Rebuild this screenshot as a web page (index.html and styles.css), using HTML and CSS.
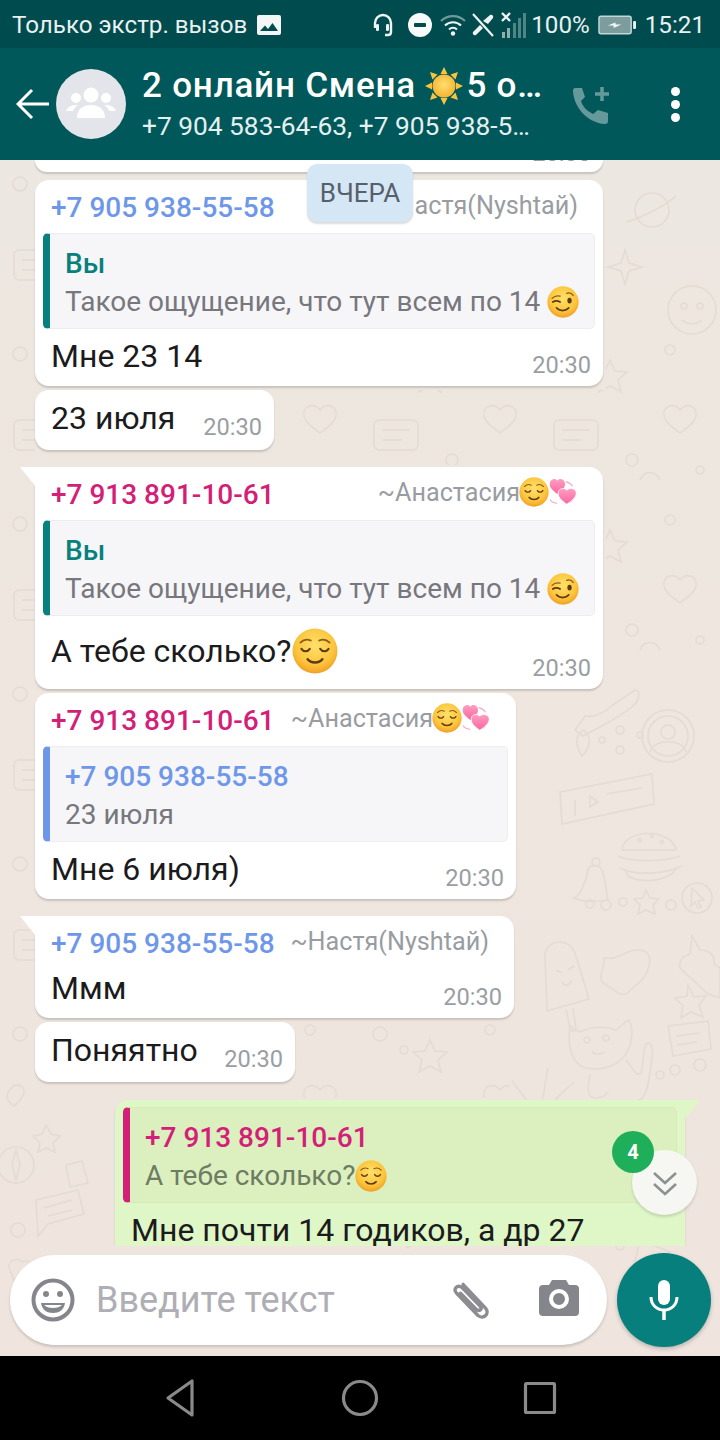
FILE: index.html
```html
<!DOCTYPE html>
<html lang="ru">
<head>
    <meta charset="UTF-8">
    <meta name="viewport" content="width=device-width, initial-scale=1.0">
    <title>2 онлайн Смена</title>
    <link rel="stylesheet" href="styles.css">
</head>
<body>
    <!-- shared emoji drawings -->
    <svg class="defs" aria-hidden="true">
        <defs>
            <radialGradient id="faceFill" cx="50%" cy="38%" r="65%">
                <stop offset="0" stop-color="#ffe06a"/>
                <stop offset="0.65" stop-color="#fcc53d"/>
                <stop offset="1" stop-color="#f09a22"/>
            </radialGradient>
            <radialGradient id="sunFill" cx="50%" cy="45%" r="55%">
                <stop offset="0" stop-color="#ffdf75"/>
                <stop offset="1" stop-color="#f8b32e"/>
            </radialGradient>
            <linearGradient id="heartFill" x1="0" y1="0" x2="0" y2="1">
                <stop offset="0" stop-color="#ff9cc0"/>
                <stop offset="1" stop-color="#f868a0"/>
            </linearGradient>
            <symbol id="relieved" viewBox="0 0 44 44">
                <circle cx="22" cy="22" r="21.5" fill="url(#faceFill)"/>
                <path d="M8 14c3-3 7-3.500 10-2M26 12c3-1.500 7-1 10 2" fill="none" stroke="#8a5a1c" stroke-width="1.600" stroke-linecap="round"/>
                <path d="M9 20c2 3 6 3 8 0M27 20c2 3 6 3 8 0" fill="none" stroke="#5e3a12" stroke-width="2" stroke-linecap="round"/>
                <path d="M15 30c3 4 11 4 14 0" fill="none" stroke="#5e3a12" stroke-width="2.400" stroke-linecap="round"/>
            </symbol>
            <symbol id="wink" viewBox="0 0 44 44">
                <circle cx="22" cy="22" r="21.500" fill="url(#faceFill)"/>
                <path d="M7 17c3-3 7-4 11-3M27 10c3-1 7 0 9 3" fill="none" stroke="#8a5a1c" stroke-width="1.800" stroke-linecap="round"/>
                <path d="M8 22c3-2 7-2 10 0" fill="none" stroke="#5e3a12" stroke-width="2.400" stroke-linecap="round"/>
                <ellipse cx="31" cy="20" rx="3" ry="4" fill="#5e3a12"/>
                <path d="M13 30c4 5 13 5 17 0" fill="none" stroke="#5e3a12" stroke-width="2.400" stroke-linecap="round"/>
            </symbol>
            <symbol id="hearts" viewBox="0 0 32 32">
                <path d="M19 5c3 1 6 2 7 5M2 24c2 3 5 4 8 4M22 27c2 0 3-1 4-2" fill="none" stroke="#f4a8c6" stroke-width="1.300"/>
                <path d="M10 18C5 14 1 11 2 6c1-4 6-5 8-2 2-3 7-2 8 2 1 5-3 8-8 12z" fill="url(#heartFill)"/>
                <path d="M20 29c-6-4-10-8-9-13 1-4 6-5 9-2 3-3 9-2 10 2 1 5-4 9-10 13z" fill="url(#heartFill)" stroke="#fff" stroke-width="0.800"/>
            </symbol>
            <symbol id="sun" viewBox="0 0 38 38">
                <path d="M19 0l3.500 7h-7zM19 38l-3.500-7h7zM0 19l7-3.500v7zM38 19l-7 3.500v-7zM5 5l7.500 2.500-5 5zM33 5l-2.500 7.500-5-5zM5 33l2.500-7.500 5 5zM33 33l-7.500-2.500 5-5z" fill="#f8c440"/>
                <circle cx="19" cy="19" r="11.500" fill="url(#sunFill)"/>
            </symbol>
        </defs>
    </svg>

    <div class="phone">
        <div class="status-bar">
            <span class="status-text">Только экстр. вызов</span>
            <svg class="st-gallery" viewBox="0 0 24 20"><path fill="#f2f6f6" fill-rule="evenodd" d="M2 0h20a2 2 0 0 1 2 2v16a2 2 0 0 1-2 2H2a2 2 0 0 1-2-2V2a2 2 0 0 1 2-2zm1 16h18l-5.500-8-4.500 6-3-3.500z"/></svg>
            <span class="spacer"></span>
            <svg class="st-headset" viewBox="0 0 20 24"><path d="M2 15v-5a8 8 0 0 1 16 0v9c0 2-1 3-3 3h-3" fill="none" stroke="#eef4f4" stroke-width="2.400"/><rect x="3" y="11" width="3" height="7" rx="1.200" fill="#eef4f4"/><rect x="13" y="11" width="3" height="7" rx="1.200" fill="#eef4f4"/></svg>
            <svg class="st-dnd" viewBox="0 0 24 24"><circle cx="12" cy="12" r="12" fill="#f6fafa"/><rect x="6" y="10" width="12" height="4" rx="1" fill="#004b4d"/></svg>
            <svg class="st-wifi" viewBox="0 0 26 22"><path d="M1 7a17 17 0 0 1 24 0" fill="none" stroke="#6f9a9a" stroke-width="2.200"/><path d="M5 11.500a11.500 11.500 0 0 1 16 0M9 15.500a6 6 0 0 1 8 0" fill="none" stroke="#eef4f4" stroke-width="2.200"/><circle cx="13" cy="19.500" r="2.200" fill="#eef4f4"/></svg>
            <svg class="st-call" viewBox="0 0 22 24"><path d="M1 1l20 22" stroke="#eef4f4" stroke-width="2.200"/><path d="M11 8l7-6c2-1 4 1 3 3l-5 6zM8 12l-7 7c-1 2 1 4 3 3l7-7z" fill="#eef4f4"/></svg>
            <svg class="st-signal" viewBox="0 0 25 26"><path d="M1 1l8 8M9 1L1 9" stroke="#eef4f4" stroke-width="2.400"/><path d="M1 20h3v6H1zM6 16h3v10H6z" fill="#8fb0b0"/><path d="M12 11h3v15h-3zM17 6h3v20h-3zM22 1h3v25h-3z" fill="#4f8587"/></svg>
            <span class="status-text st-pct">100%</span>
            <svg class="st-battery" viewBox="0 0 40 20"><rect x="1" y="1" width="33" height="18" rx="2" fill="#7c9c9e" stroke="#c4d6d6" stroke-width="1.500"/><rect x="36" y="6" width="3" height="8" rx="1" fill="#e8f0f0"/><path d="M10 10.500l8-3v2h6l-8 3.500v-2.500z" fill="#f4f8f8"/></svg>
            <span class="status-text st-clock">15:21</span>
        </div>

        <header class="chat-header">
            <svg class="back-icon" viewBox="0 0 34 32"><path d="M33 16H3M16 2L2 16l14 14" fill="none" stroke="#fff" stroke-width="3"/></svg>
            <div class="avatar">
                <svg viewBox="0 0 50 34"><circle cx="25" cy="8" r="7.500" fill="#fff"/><circle cx="10" cy="11" r="5" fill="#fff"/><circle cx="40" cy="11" r="5" fill="#fff"/><path d="M11 31c0-9 6-13 14-13s14 4 14 13z" fill="#fff"/><path d="M0 24c2-5 6-6 12-6-3 2-4 3-5 6zM50 24c-2-5-6-6-12-6 3 2 4 3 5 6z" fill="#fff"/></svg>
            </div>
            <div class="chat-title">
                <div class="group-name">2 онлайн Смена <svg class="emoji-sun"><use href="#sun"/></svg>5 о…</div>
                <div class="group-members">+7 904 583-64-63, +7 905 938-5…</div>
            </div>
            <svg class="add-call" viewBox="0 0 40 40"><path d="M3 2h7l3 9-4 4c2 6 6 10 12 13l5-4 10 3v8c0 2-1 3-3 3C15 37 1 20 1 4c0-1 1-2 2-2z" fill="#66999c"/><path d="M30 1v14M23 8h14" stroke="#66999c" stroke-width="3.500"/></svg>
            <div class="menu-dots"><i></i><i></i><i></i></div>
        </header>

        <main class="chat">
            <svg class="wallpaper" viewBox="0 0 720 1196" aria-hidden="true">
                <defs>
                    <pattern id="doodles" width="180" height="170" patternUnits="userSpaceOnUse">
                        <circle cx="20" cy="24" r="7"/><circle cx="44" cy="40" r="4"/><circle cx="130" cy="20" r="5"/><circle cx="92" cy="130" r="6"/><circle cx="160" cy="140" r="4"/>
                        <path d="M70 30l5 11 12 1-9 8 3 12-11-6-11 6 3-12-9-8 12-1z"/>
                        <path d="M140 80c-6-8-18-4-16 6 1 7 10 12 16 17 6-5 15-10 16-17 2-10-10-14-16-6z"/>
                        <rect x="14" y="90" width="44" height="30" rx="5"/><path d="M22 100h28M22 110h20"/>
                        <path d="M100 150c4-10 16-10 20 0"/>
                    </pattern>
                </defs>
                <rect class="doodle-fill" x="606" y="170" width="114" height="350"/>
                <rect class="doodle-fill" x="0" y="0" width="35" height="930"/>
                <rect class="doodle-fill" x="280" y="230" width="326" height="75"/>
                <rect class="doodle-fill" x="300" y="862" width="210" height="76"/>
                <g class="doodle">
                    <!-- planet and star, top right -->
                    <circle cx="652" cy="50" r="17"/><path d="M626 62c10-2 40-16 50-26"/>
                    <path d="M625 90l4 13 13 4-13 4-4 13-4-13-13-4 13-4z"/>
                    <circle cx="692" cy="150" r="24"/><circle cx="684" cy="146" r="3"/><circle cx="700" cy="146" r="3"/><path d="M682 160c6 5 14 5 20 0"/>
                    <!-- shoe -->
                    <path d="M575 570l10-14c12 2 20-4 26-10l24-16c6 0 4 10 0 14-12 12-34 22-52 32z"/>
                    <!-- profile circle -->
                    <circle cx="668" cy="576" r="26"/><circle cx="668" cy="572" r="7"/><path d="M650 592c3-14 33-14 36 0"/><circle cx="668" cy="576" r="20"/>
                    <!-- voice note -->
                    <path d="M560 632l92-18 2 30-92 20z"/><path d="M575 640v16M590 636l8 6-8 5zM606 634l36-6"/>
                    <!-- pin and dots -->
                    <path d="M584 570c-8 4-10 14-2 26 8-8 10-18 2-26z"/><circle cx="620" cy="570" r="4"/><circle cx="640" cy="575" r="3"/><circle cx="602" cy="580" r="3"/><circle cx="620" cy="590" r="4"/>
                    <!-- burger -->
                    <path d="M622 690c2-22 50-22 54 0z"/><path d="M618 696c12 6 46 6 62 0M620 708c14 8 46 6 62-2"/><path d="M626 712c2 12 44 12 50-4"/>
                    <circle cx="640" cy="680" r="1.500"/><circle cx="652" cy="676" r="1.500"/><circle cx="662" cy="682" r="1.500"/>
                    <!-- bell -->
                    <path d="M574 738c6-2 12-16 14-28 2-6 10-6 14 0 4 8 4 24 6 30-10 2-26 2-34-2z"/><circle cx="596" cy="702" r="4"/>
                    <!-- star row -->
                    <path d="M646 730l4 8 9 1-6 6 2 9-9-4-8 4 2-9-6-6 9-1z"/><circle cx="590" cy="744" r="4"/><circle cx="606" cy="745" r="5"/><circle cx="623" cy="742" r="4"/><circle cx="671" cy="745" r="5"/>
                    <circle cx="697" cy="738" r="15"/><path d="M692 728l12 12-6 1 3 6-3 1-3-6-4 4z"/>
                    <!-- popsicle -->
                    <path d="M545 795c2-16 24-18 30-2l14 46-42 12z"/><path d="M566 850l4 18c1 4 6 4 6 0l-3-20"/><path d="M556 810l6 3M574 806l-6 4M562 822c3 5 8 4 9-2"/>
                    <!-- splash -->
                    <path d="M604 798c16 2 20-8 34-8s14 12 8 24c-4 8-14 14-20 20-8 2-14-6-24-12-4-10 4-16 2-24z"/>
                    <!-- cupcake -->
                    <path d="M692 776l8 14c10 0 16 6 14 14l6 4v30l-12-4-28-26c-2-8 4-12 10-14z"/>
                    <path d="M660 840l6 12 12-1-7 9 4 12-12-5-10 6 2-12-8-8 12-2z" transform="translate(28 -15)"/>
                    <!-- cat -->
                    <path d="M570 866l10 6c12-6 26-6 36-2l12-10c6 4 4 24 0 30-6 14-24 22-42 18-10-2-20-16-16-42z"/>
                    <path d="M626 900c8 10 10 16 14 14 4-2 2-24 6-30 4-4 8 4 6 14-2 14-4 36-10 40-8 6-16 8-22 6M590 914c-2 12-4 22 4 24 6 0 12-2 14-6"/>
                    <circle cx="587" cy="880" r="3"/><circle cx="606" cy="878" r="3"/><path d="M592 892c4 3 8 3 12 0"/>
                    <!-- note -->
                    <path d="M668 866l40-5 3 28-38 7z"/><path d="M676 876l24-3M677 885l20-3"/>
                    <!-- hand and bits, under the bubbles -->
                    <path d="M512 920c6 12 16 18 20 30M548 908c-4 14-2 26-8 38M574 922c-8 8-20 16-26 28"/>
                    <circle cx="660" cy="915" r="4"/><circle cx="675" cy="910" r="5"/><circle cx="700" cy="905" r="6"/>
                    <!-- left strip, compass and puzzle -->
                    <circle cx="16" cy="1005" r="18"/><path d="M16 990l4 15-4 15-4-15z"/>
                    <path d="M46 965l5 9 9 2-7 7 2 9-9-4-8 4 2-9-7-7 9-2z"/><path d="M66 1005l16-4 6 22-18 4z"/>
                    <path d="M36 1040l42-10 6 24-36 10-10 12z"/><path d="M44 1048l28-8M48 1056l24-6"/>
                    <path d="M24 960c4-8 14-6 14 2 0 6-6 10-10 14-6-4-10-10-4-16z" transform="translate(-14 -30)"/>
                    <circle cx="18" cy="1070" r="7"/><path d="M10 1110c-4-8 6-14 12-8 6-4 14 4 8 12l-12 12c-4-4-6-10-8-16z"/>
                    <!-- below the last bubble -->
                    <path d="M400 1076c-4-6 4-12 10-6 6-4 12 4 8 10l-10 8z"/><path d="M640 1080l30 12-12 30-26-8z"/><circle cx="620" cy="1086" r="4"/>
                </g>
            </svg>

            <div class="messages">
                <div class="bubble bubble-cut"><span class="time">20:30</span></div>

                <div class="bubble width-wide">
                    <div class="msg-head"><span class="sender blue">+7 905 938-55-58</span><span class="alias">~Настя(Nyshtaй)</span></div>
                    <div class="quote quote-teal">
                        <div class="quote-name teal">Вы</div>
                        <div class="quote-text">Такое ощущение, что тут всем по 14 <svg class="emoji"><use href="#wink"/></svg></div>
                    </div>
                    <div class="msg-body"><span class="msg-text">Мне 23 14</span><span class="time">20:30</span></div>
                </div>

                <div class="bubble width-july">
                    <div class="msg-body msg-solo"><span class="msg-text">23 июля</span><span class="time">20:30</span></div>
                </div>

                <div class="bubble width-wide tail">
                    <div class="msg-head"><span class="sender pink">+7 913 891-10-61</span><span class="alias">~Анастасия<svg class="emoji-small"><use href="#relieved"/></svg><svg class="emoji-small"><use href="#hearts"/></svg></span></div>
                    <div class="quote quote-teal">
                        <div class="quote-name teal">Вы</div>
                        <div class="quote-text">Такое ощущение, что тут всем по 14 <svg class="emoji"><use href="#wink"/></svg></div>
                    </div>
                    <div class="msg-body msg-tall"><span class="msg-text">А тебе сколько?<svg class="emoji-big"><use href="#relieved"/></svg></span><span class="time">20:30</span></div>
                </div>

                <div class="bubble width-mid">
                    <div class="msg-head"><span class="sender pink">+7 913 891-10-61</span><span class="alias">~Анастасия<svg class="emoji-small"><use href="#relieved"/></svg><svg class="emoji-small"><use href="#hearts"/></svg></span></div>
                    <div class="quote quote-blue">
                        <div class="quote-name blue">+7 905 938-55-58</div>
                        <div class="quote-text">23 июля</div>
                    </div>
                    <div class="msg-body"><span class="msg-text">Мне 6 июля)</span><span class="time">20:30</span></div>
                </div>

                <div class="bubble width-mmm tail">
                    <div class="msg-head"><span class="sender blue">+7 905 938-55-58</span><span class="alias">~Настя(Nyshtaй)</span></div>
                    <div class="msg-body msg-short"><span class="msg-text">Ммм</span><span class="time">20:30</span></div>
                </div>

                <div class="bubble width-clear">
                    <div class="msg-body msg-solo"><span class="msg-text">Поняятно</span><span class="time">20:30</span></div>
                </div>

                <div class="bubble sent">
                    <div class="quote quote-pink">
                        <div class="quote-name pink">+7 913 891-10-61</div>
                        <div class="quote-text">А тебе сколько?<svg class="emoji"><use href="#relieved"/></svg></div>
                    </div>
                    <div class="msg-body"><span class="msg-text">Мне почти 14 годиков, а др 27</span></div>
                </div>
            </div>

            <div class="date-chip">ВЧЕРА</div>

            <div class="scroll-down">
                <span class="unread">4</span>
                <svg viewBox="0 0 26 26"><path d="M2 3l11 10L24 3M2 14l11 10 11-10" fill="none" stroke="#8c9191" stroke-width="2.600"/></svg>
            </div>

            <div class="composer">
                <div class="input-pill">
                    <svg class="ico-smile" viewBox="0 0 44 44"><circle cx="22" cy="22" r="19.500" fill="none" stroke="#85868c" stroke-width="4"/><circle cx="15" cy="16" r="3" fill="#85868c"/><circle cx="29" cy="16" r="3" fill="#85868c"/><path d="M10 25h24c-1 7-6 10-12 10s-11-3-12-10z" fill="#85868c"/><path d="M13 27h18c-2 2-5 3-9 3s-7-1-9-3z" fill="#fff"/></svg>
                    <span class="placeholder">Введите текст</span>
                    <svg class="ico-clip" viewBox="0 0 44 40"><path d="M13 5l24 22c5 5-1 12-7 8L7 14c-4-3 0-9 5-6l20 18c2 3-1 5-4 3L11 14" fill="none" stroke="#8c8c92" stroke-width="3.400" stroke-linecap="round"/></svg>
                    <svg class="ico-camera" viewBox="0 0 40 36"><path fill="#85868c" fill-rule="evenodd" d="M13 0h14l3 5h6a4 4 0 0 1 4 4v23a4 4 0 0 1-4 4H4a4 4 0 0 1-4-4V9a4 4 0 0 1 4-4h6zm7 9a10 10 0 1 0 0 20 10 10 0 0 0 0-20zm0 4a6 6 0 1 1 0 12 6 6 0 0 1 0-12z"/></svg>
                </div>
                <div class="mic-btn">
                    <svg viewBox="0 0 30 40"><rect x="9" y="0" width="12" height="25" rx="6" fill="#fff"/><path d="M2 17c0 8 6 13 13 13s13-5 13-13" fill="none" stroke="#fff" stroke-width="3"/><path d="M15 29v11" stroke="#fff" stroke-width="3.500"/></svg>
                </div>
            </div>
        </main>

        <nav class="nav-bar">
            <svg viewBox="-3 0 38 42"><path d="M28 4v34L4 21z" fill="none" stroke="#8a8a8a" stroke-width="3.200" stroke-linejoin="round"/></svg>
            <svg viewBox="0 -2 38 42"><circle cx="19" cy="19" r="16.500" fill="none" stroke="#8a8a8a" stroke-width="3.200"/></svg>
            <svg viewBox="-2 -4 38 42"><rect x="2.500" y="2.500" width="29" height="29" rx="1" fill="none" stroke="#8a8a8a" stroke-width="3.200"/></svg>
        </nav>
    </div>
</body>
</html>
```

FILE: styles.css
```css
* {
    box-sizing: border-box;
}

html,
body {
    margin: 0;
    padding: 0;
}

body {
    font-family: Roboto, "Noto Sans", sans-serif;
    color: #1b1b1d;
}

.defs {
    position: absolute;
    width: 0;
    height: 0;
}

.phone {
    width: 720px;
    height: 1440px;
    display: flex;
    flex-direction: column;
    overflow: hidden;
}

/* status bar */
.status-bar {
    height: 48px;
    flex: none;
    background-color: #004b4d;
    display: flex;
    align-items: center;
    padding: 2px 15px 0 12px;
    color: #e9f1f1;
}

.status-text {
    font-size: 24.2px;
    line-height: 28px;
    white-space: nowrap;
}

.spacer {
    flex: 1;
}

.status-bar svg {
    flex: none;
}

.st-gallery {
    width: 24px;
    height: 20px;
    margin-left: 10px;
}

.st-headset {
    width: 20px;
    height: 24px;
}

.st-dnd {
    width: 24px;
    height: 24px;
    margin-left: 15px;
}

.st-wifi {
    width: 26px;
    height: 22px;
    margin-left: 8px;
}

.st-call {
    width: 22px;
    height: 24px;
    margin-left: 6px;
}

.st-signal {
    width: 25px;
    height: 26px;
    margin-left: 7px;
}

.st-pct {
    margin-left: 5px;
}

.st-battery {
    width: 39px;
    height: 20px;
    margin-left: 8px;
}

.st-clock {
    margin-left: 8px;
}

/* header */
.chat-header {
    height: 112px;
    flex: none;
    background-color: #00585a;
    display: flex;
    align-items: center;
    padding-left: 16px;
    color: #fff;
}

.back-icon {
    width: 34px;
    height: 32px;
    flex: none;
}

.avatar {
    width: 70px;
    height: 70px;
    margin-left: 6px;
    flex: none;
    border-radius: 50%;
    background-color: #e3e5ea;
    display: flex;
    align-items: center;
    justify-content: center;
}

.avatar svg {
    width: 50px;
    height: 34px;
}

.chat-title {
    width: 426px;
    margin-left: 16px;
    flex: none;
    white-space: nowrap;
}

.group-name {
    font-size: 35px;
    font-weight: 500;
    line-height: 40px;
    height: 40px;
    padding-top: 1px;
    letter-spacing: 0.8px;
}

.emoji-sun {
    width: 38px;
    height: 38px;
    vertical-align: -8px;
    margin-right: 3px;
}

.group-members {
    font-size: 26.3px;
    line-height: 36px;
    margin-top: 3px;
    color: #e4f0f0;
}

.add-call {
    width: 40px;
    height: 40px;
    margin-left: 4px;
    margin-top: 4px;
    flex: none;
}

.menu-dots {
    margin-left: 59px;
    display: flex;
    flex-direction: column;
    gap: 4px;
}

.menu-dots i {
    display: block;
    width: 9px;
    height: 9px;
    border-radius: 50%;
    background-color: #fff;
}

/* chat area */
.chat {
    flex: 1;
    min-height: 0;
    position: relative;
    display: flex;
    flex-direction: column;
    background: linear-gradient(#ece7e0, #eee6df 45%, #efe4de);
}

.wallpaper {
    position: absolute;
    top: 0;
    left: 0;
    width: 720px;
    height: 1196px;
}

.doodle-fill {
    fill: url(#doodles);
}

.doodle,
#doodles {
    fill: none;
    stroke: #e4dbd3;
    stroke-width: 1.6;
}

.messages {
    flex: 1;
    min-height: 0;
    position: relative;
    overflow: hidden;
    display: flex;
    flex-direction: column;
    align-items: flex-start;
    padding: 0 35px;
}

.bubble {
    flex: none;
    position: relative;
    background-color: #fff;
    border-radius: 14px;
    box-shadow: 0 2px 2px rgba(0, 0, 0, 0.16);
    padding: 0 8px;
    margin-top: 4px;
}

.bubble-cut {
    margin-top: 0;
    width: 568px;
    height: 12px;
    overflow: hidden;
    border-radius: 0 0 14px 14px;
    display: flex;
    justify-content: flex-end;
    align-items: flex-end;
    padding: 0 12px 7px 0;
}

.bubble-cut + .bubble {
    margin-top: 8px;
}

.bubble.tail {
    margin-top: 17px;
    border-top-left-radius: 0;
}

.bubble.tail::before {
    content: "";
    position: absolute;
    top: 0;
    left: -15px;
    width: 16px;
    height: 20px;
    background-color: #fff;
    clip-path: polygon(0 0, 100% 0, 100% 100%);
}

.bubble.sent {
    width: 570px;
    margin: 18px 0 0 80px;
    padding-top: 7px;
    background-color: #dff6c6;
    border-top-right-radius: 0;
}

.bubble.sent::after {
    content: "";
    position: absolute;
    top: 0;
    right: -15px;
    width: 16px;
    height: 20px;
    background-color: #dff6c6;
    clip-path: polygon(0 0, 100% 0, 0 100%);
}

.width-wide {
    width: 568px;
}

.width-july {
    width: 239px;
}

.width-mid {
    width: 481px;
}

.width-mmm {
    width: 479px;
}

.width-clear {
    width: 260px;
}

.msg-head {
    height: 53px;
    display: flex;
    align-items: center;
    justify-content: space-between;
    padding: 2px 17px 0 8px;
    white-space: nowrap;
}

.sender,
.quote-name {
    font-size: 28px;
    font-weight: 500;
    line-height: 38px;
}

.alias {
    font-size: 25.2px;
    line-height: 34px;
    margin-bottom: 4px;
    color: #999ca1;
}

.blue {
    color: #6f97e9;
}

.pink {
    color: #d31f78;
}

.teal {
    color: #07807e;
}

.quote {
    height: 96px;
    padding: 11px 0 0 15px;
    border: 1px solid #ededf0;
    border-left-width: 7px;
    border-radius: 5px;
    background-color: #f6f6f9;
    white-space: nowrap;
}

.quote-teal {
    border-left-color: #07807e;
}

.quote-blue {
    border-left-color: #6f97e9;
}

.quote-pink {
    border-color: #d4ebb6;
    border-left-color: #d31f78;
    background-color: #dcf0bf;
}

.quote-text {
    font-size: 28px;
    line-height: 38px;
    color: #77777d;
}

.quote-pink .quote-text {
    color: #6d7c62;
}

.msg-body {
    height: 57px;
    display: flex;
    justify-content: space-between;
    align-items: flex-end;
    padding: 0 4px 0 8px;
    white-space: nowrap;
}

.msg-text {
    align-self: flex-start;
    font-size: 32px;
    line-height: 54px;
}

.time {
    font-size: 23.6px;
    line-height: 24px;
    margin-bottom: 9px;
    color: #9a9ea2;
}

.bubble-cut .time {
    margin-bottom: 0;
}

.msg-solo {
    height: 60px;
}

.msg-solo .msg-text {
    line-height: 56px;
}

.msg-solo .time {
    margin-bottom: 11px;
}

.msg-tall {
    height: 73px;
}

.msg-tall .msg-text {
    line-height: 70px;
    display: flex;
    align-items: center;
}

.msg-short {
    height: 49px;
}

.msg-short .msg-text {
    line-height: 38px;
}

.emoji {
    width: 32px;
    height: 32px;
    vertical-align: -7px;
}

.emoji-small {
    width: 30px;
    height: 30px;
    vertical-align: -6px;
    margin-left: -1px;
}

.emoji-big {
    width: 46px;
    height: 46px;
    margin-left: 1px;
}

/* things over the list */
.date-chip {
    position: absolute;
    top: 4px;
    left: 307px;
    width: 106px;
    height: 58px;
    border-radius: 10px;
    background-color: #d5e6f5;
    box-shadow: 0 2px 2px rgba(0, 0, 0, 0.14);
    display: flex;
    align-items: center;
    justify-content: center;
    font-size: 26px;
    color: #56606c;
}

.scroll-down {
    position: absolute;
    left: 632px;
    top: 990px;
    width: 65px;
    height: 65px;
    border-radius: 50%;
    background-color: #f6f6f2;
    box-shadow: 0 2px 3px rgba(0, 0, 0, 0.14);
    display: flex;
    align-items: center;
    justify-content: center;
}

.scroll-down svg {
    width: 26px;
    height: 26px;
}

.unread {
    position: absolute;
    top: -19px;
    left: -20px;
    width: 42px;
    height: 42px;
    border-radius: 50%;
    background-color: #1fae5a;
    color: #fff;
    font-size: 20px;
    font-weight: 700;
    display: flex;
    align-items: center;
    justify-content: center;
}

/* composer */
.composer {
    height: 110px;
    flex: none;
    position: relative;
    display: flex;
    align-items: flex-start;
    padding: 7px 9px 0 10px;
    gap: 10px;
}

.input-pill {
    width: 597px;
    height: 90px;
    margin-top: 2px;
    border-radius: 45px;
    background-color: #fff;
    box-shadow: 0 2px 3px rgba(0, 0, 0, 0.16);
    display: flex;
    align-items: center;
    padding-left: 21px;
}

.ico-smile {
    width: 44px;
    height: 44px;
    flex: none;
}

.placeholder {
    margin-left: 21px;
    width: 353px;
    flex: none;
    font-size: 36px;
    color: #aeaeb4;
}

.ico-clip {
    width: 44px;
    height: 40px;
    flex: none;
    transform: rotate(4deg);
}

.ico-camera {
    width: 40px;
    height: 36px;
    margin-left: 46px;
    margin-bottom: 4px;
    flex: none;
}

.mic-btn {
    width: 94px;
    height: 94px;
    flex: none;
    border-radius: 50%;
    background-color: #067f7d;
    box-shadow: 0 2px 4px rgba(0, 0, 0, 0.22);
    display: flex;
    align-items: center;
    justify-content: center;
}

.mic-btn svg {
    width: 30px;
    height: 40px;
}

/* android nav */
.nav-bar {
    height: 84px;
    flex: none;
    background-color: #000;
    display: flex;
    align-items: center;
    justify-content: center;
    gap: 142px;
}

.nav-bar svg {
    width: 38px;
    height: 42px;
}
```
